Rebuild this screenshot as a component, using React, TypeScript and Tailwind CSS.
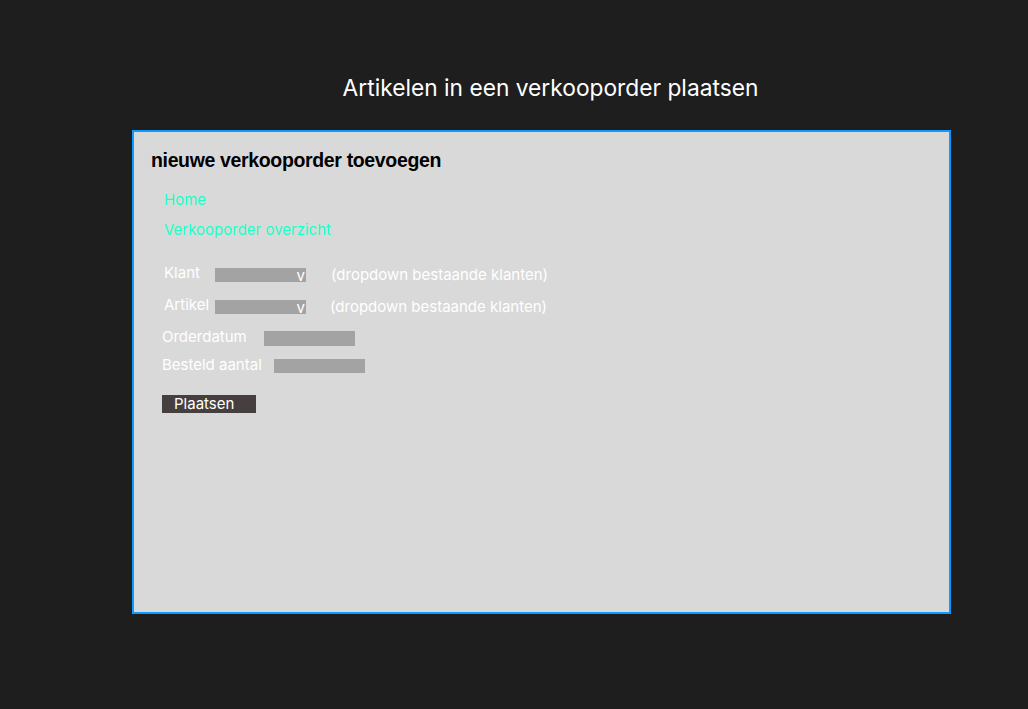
import React from 'react';

function SelectBox() {
    return (
        <div className="flex h-[14px] w-[91px] items-start justify-end bg-[#a3a3a3] pr-[1px] text-[15px] leading-[15px] text-white">
            v
        </div>
    );
}

export default function App() {
    return (
        <div className="min-h-[709px] w-full bg-[#1e1e1e] pt-[74px] font-['Inter',sans-serif]">
            <h1 className="pl-[73px] text-center text-[22.75px] leading-[28px] text-white">
                Artikelen in een verkooporder plaatsen
            </h1>

            <div className="mt-[28px] pl-[132px]">
                <div className="flex h-[484px] w-[819px] flex-col border-2 border-[#0d99ff] bg-[#d9d9d9] pl-[17px] pt-[16px]">
                    <h2 className="font-['Liberation_Sans',Arial,sans-serif] text-[19.5px] font-bold leading-[24px] tracking-[-0.35px] text-black">
                        nieuwe verkooporder toevoegen
                    </h2>

                    {/* navigatie */}
                    <div className="mt-[19px] flex flex-col gap-[12px] pl-[13px] text-[15px] leading-[18px] text-[#1affc8]">
                        <a>Home</a>
                        <a>Verkooporder overzicht</a>
                    </div>

                    {/* formulier */}
                    <div className="flex flex-col text-[15px] leading-[18px] text-white">
                        <div className="mt-[25px] flex items-start pl-[13px]">
                            <span className="w-[51px]">Klant</span>
                            <div className="mt-[4px]"><SelectBox /></div>
                            <span className="ml-[25px] mt-[2px]">(dropdown bestaande klanten)</span>
                        </div>
                        <div className="mt-[12px] flex items-start pl-[13px]">
                            <span className="w-[51px]">Artikel</span>
                            <div className="mt-[4px]"><SelectBox /></div>
                            <span className="ml-[24px] mt-[2px]">(dropdown bestaande klanten)</span>
                        </div>
                        <div className="mt-[12px] flex items-start pl-[11px]">
                            <span className="w-[102px]">Orderdatum</span>
                            <div className="mt-[3px] h-[15px] w-[91px] bg-[#a3a3a3]" />
                        </div>
                        <div className="mt-[10px] flex items-start pl-[11px]">
                            <span className="w-[112px]">Besteld aantal</span>
                            <div className="mt-[3px] h-[14px] w-[91px] bg-[#a3a3a3]" />
                        </div>
                        <div className="mt-[21px] pl-[11px]">
                            <button className="block h-[18px] w-[94px] bg-[#463f3f] pl-[12px] text-left text-[15px] leading-[18px] text-white">
                                Plaatsen
                            </button>
                        </div>
                    </div>
                </div>
            </div>
        </div>
    );
}
